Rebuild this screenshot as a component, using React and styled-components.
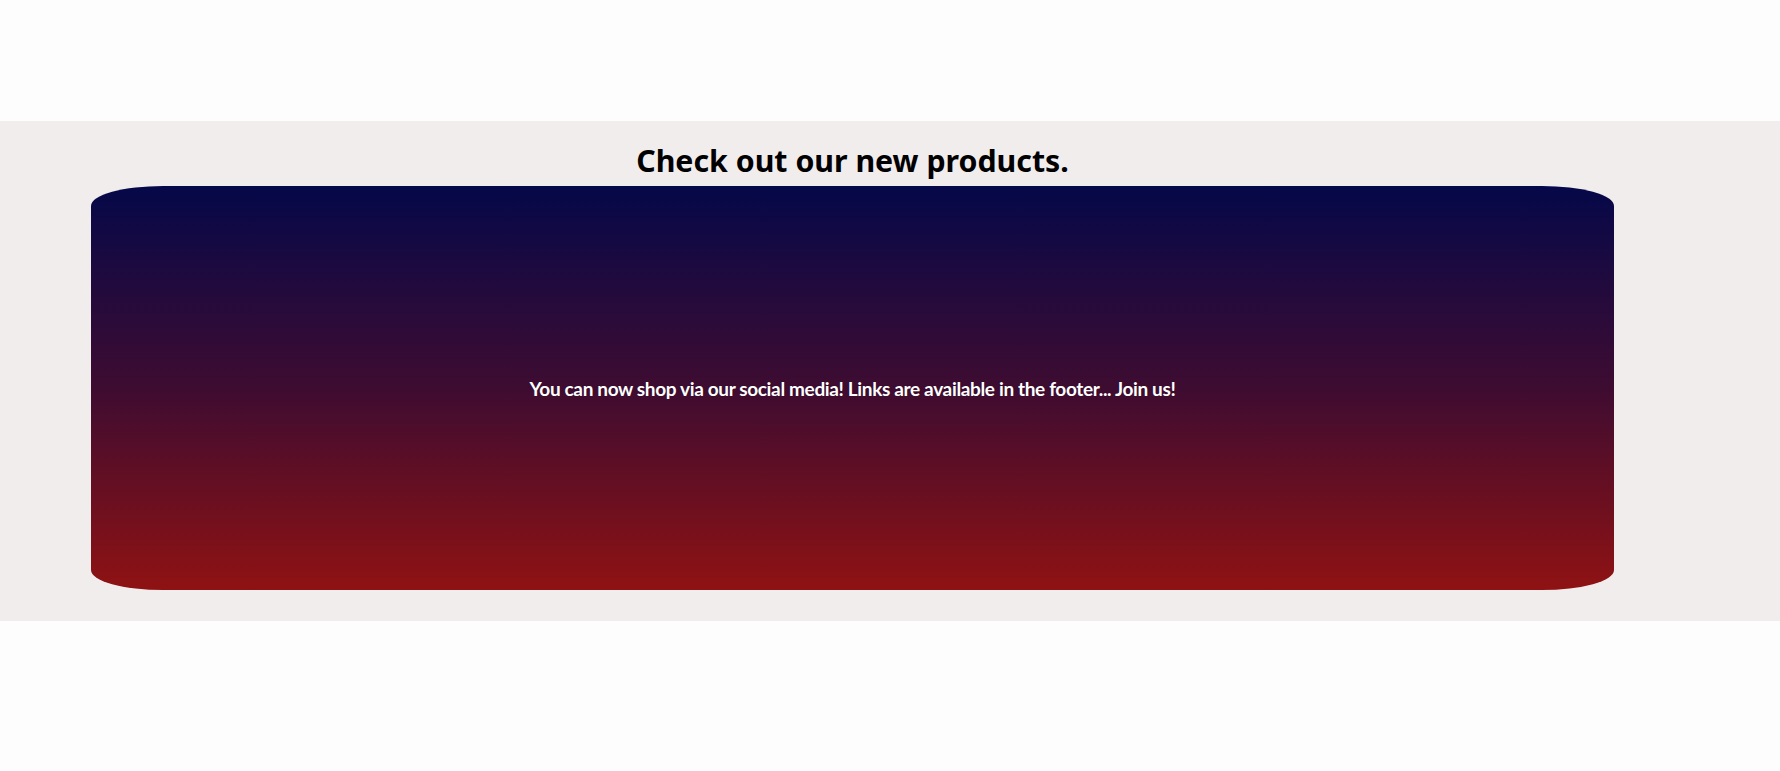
import React from "react";
import styled, { createGlobalStyle } from "styled-components";

const Global = createGlobalStyle`
  html, body { margin: 0; padding: 0; background: #fdfdfd; }
  body { font-family: "Noto Sans", "Open Sans", sans-serif; }
`;

const Page = styled.div`
  width: 1780px;
  height: 771px;
  padding-top: 121px;
  box-sizing: border-box;
`;

const Band = styled.section`
  background: #f1eded;
  height: 500px;
  box-sizing: border-box;
  padding: 18px 166px 0 91px;
  display: flex;
  flex-direction: column;
  align-items: center;
`;

const Heading = styled.h2`
  margin: 0;
  font-family: "Noto Sans", sans-serif;
  font-weight: 700;
  font-size: 30.3px;
  line-height: 43px;
  color: #000;
  text-align: center;
  height: 47px;
`;

const Card = styled.div`
  width: 100%;
  height: 404px;
  border-radius: 72px / 20px;
  background: linear-gradient(to bottom, #050849 0%, #3e0c31 50%, #8f1213 100%);
  display: flex;
  align-items: center;
  justify-content: center;
`;

const Message = styled.p`
  margin: 0;
  color: #ffffff;
  font-family: "Lato", sans-serif;
  font-weight: 700;
  font-size: 19px;
  letter-spacing: -0.35px;
  text-shadow: 0 0 1px rgba(0, 0, 0, 0.4);
`;

export default function App() {
  return (
    <>
      <Global />
      <Page>
        <Band>
          <Heading>Check out our new products.</Heading>
          <Card>
            <Message>
              You can now shop via our social media! Links are available in the footer... Join us!
            </Message>
          </Card>
        </Band>
      </Page>
    </>
  );
}
